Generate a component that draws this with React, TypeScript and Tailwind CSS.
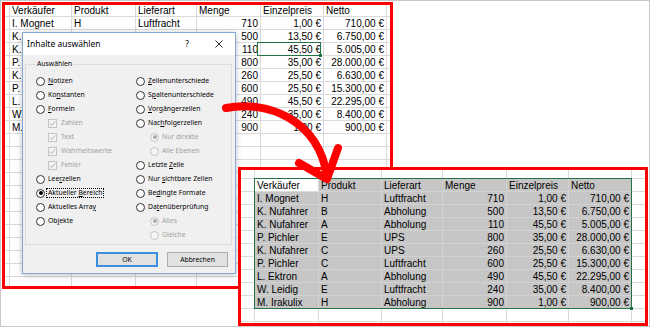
const daten = [
  ["I. Mognet", "H", "Luftfracht", "710", "1,00 €", "710,00 €"],
  ["K. Nufahrer", "B", "Abholung", "500", "13,50 €", "6.750,00 €"],
  ["K. Nufahrer", "A", "Abholung", "110", "45,50 €", "5.005,00 €"],
  ["P. Pichler", "E", "UPS", "800", "35,00 €", "28.000,00 €"],
  ["K. Nufahrer", "C", "UPS", "260", "25,50 €", "6.630,00 €"],
  ["P. Pichler", "C", "Luftfracht", "600", "25,50 €", "15.300,00 €"],
  ["L. Ektron", "A", "Abholung", "490", "45,50 €", "22.295,00 €"],
  ["W. Leidig", "E", "Luftfracht", "240", "35,00 €", "8.400,00 €"],
  ["M. Irakulix", "H", "Abholung", "900", "1,00 €", "900,00 €"],
];
const kopf = ["Verkäufer", "Produkt", "Lieferart", "Menge", "Einzelpreis", "Netto"];

// Tabelle 1: Spaltenbreiten links oben, Tabelle 2: unten rechts
const spalten1 = [2, 62, 64, 61, 64, 63, 63, 20];
const spalten2 = [14, 64, 63, 61, 64, 62, 63, 20];

function Zeile({ werte, breiten, hoehe, markiert, aktivErste, verdeckt }: { werte: string[]; breiten: number[]; hoehe: number; markiert?: boolean; aktivErste?: boolean; verdeckt?: boolean }) {
  return (
    <div className="flex shrink-0" style={{ height: hoehe }}>
      {breiten.map((b, i) => {
        // Zellen, die ganz hinter dem Dialog liegen, bleiben leer
        const txt = i > 0 && i < 7 && !(verdeckt && (i === 2 || i === 3)) ? werte[i - 1] ?? "" : "";
        const rechts = i >= 4 && i <= 6 && !kopf.includes(txt);
        const grau = markiert && i > 0 && i < 7 && !(aktivErste && i === 1);
        return (
          <div
            key={i}
            style={{ width: b }}
            className={
              "shrink-0 border-r border-b whitespace-nowrap overflow-hidden px-[2px] " +
              (grau ? "bg-[#c6c6c6] border-[#d2d2d2] " : "border-[#dadada] ") +
              (rechts ? "text-right" : "text-left")
            }
          >
            {txt}
          </div>
        );
      })}
    </div>
  );
}

function Radio({ an, grau }: { an?: boolean; grau?: boolean }) {
  return (
    <span className={"w-[9px] h-[9px] shrink-0 rounded-full border flex items-center justify-center " + (grau ? "border-[#c4c4c4] bg-[#f4f4f4]" : "border-[#333] bg-white")}>
      {an && <span className={"w-[4px] h-[4px] rounded-full " + (grau ? "bg-[#a8a8a8]" : "bg-black")} />}
    </span>
  );
}

function Haken() {
  return (
    <span className="w-[9px] h-[9px] shrink-0 border border-[#c4c4c4] bg-[#f4f4f4] flex items-center justify-center">
      <svg width="7" height="7" viewBox="0 0 7 7">
        <path d="M0.8 3.6 L2.7 5.4 L6.2 1.3" fill="none" stroke="#a8a8a8" strokeWidth="0.9" />
      </svg>
    </span>
  );
}

function Text({ t, u }: { t: string; u?: number }) {
  if (u === undefined) return <span>{t}</span>;
  return (
    <span>
      {t.slice(0, u)}
      <u>{t[u]}</u>
      {t.slice(u + 1)}
    </span>
  );
}

type Eintrag = { t: string; u?: number; art: "radio" | "check" | "sub"; an?: boolean; grau?: boolean; fokus?: boolean };

const links: Eintrag[] = [
  { t: "Notizen", u: 0, art: "radio" },
  { t: "Konstanten", u: 2, art: "radio" },
  { t: "Formeln", u: 0, art: "radio" },
  { t: "Zahlen", art: "check", grau: true },
  { t: "Text", art: "check", grau: true },
  { t: "Wahrheitswerte", art: "check", grau: true },
  { t: "Fehler", art: "check", grau: true },
  { t: "Leerzellen", u: 3, art: "radio" },
  { t: "Aktueller Bereich", u: 10, art: "radio", an: true, fokus: true },
  { t: "Aktuelles Array", u: 14, art: "radio" },
  { t: "Objekte", u: 2, art: "radio" },
];
const rechts: Eintrag[] = [
  { t: "Zeilenunterschiede", u: 0, art: "radio" },
  { t: "Spaltenunterschiede", u: 1, art: "radio" },
  { t: "Vorgängerzellen", u: 0, art: "radio" },
  { t: "Nachfolgerzellen", u: 3, art: "radio" },
  { t: "Nur direkte", art: "sub", an: true, grau: true },
  { t: "Alle Ebenen", art: "sub", grau: true },
  { t: "Letzte Zelle", u: 7, art: "radio" },
  { t: "Nur sichtbare Zellen", u: 4, art: "radio" },
  { t: "Bedingte Formate", u: 2, art: "radio" },
  { t: "Datenüberprüfung", u: 2, art: "radio" },
  { t: "Alles", art: "sub", an: true, grau: true },
  { t: "Gleiche", art: "sub", grau: true },
];

function Option({ e }: { e: Eintrag }) {
  return (
    <div className={"h-[14px] flex items-center " + (e.grau ? "text-[#a0a0a0] " : "") + (e.art === "check" ? "ml-[12px] gap-[4px]" : e.art === "sub" ? "ml-[14px] gap-[3px]" : "gap-[3px]")}>
      {e.art === "check" ? <Haken /> : <Radio an={e.an} grau={e.grau} />}
      {e.fokus ? (
        <span className="border border-dotted border-black px-[1px] -ml-[2px] leading-[8px]">
          <Text t={e.t} u={e.u} />
        </span>
      ) : (
        <Text t={e.t} u={e.u} />
      )}
    </div>
  );
}

function Dialog() {
  return (
    <div className="absolute left-[21px] top-[31px] w-[214px] h-[242px] border border-[#86a8d4] bg-[#f0f0f0] shadow-[0_1px_6px_rgba(0,0,0,0.25)] flex flex-col font-['Noto_Sans',sans-serif] text-black">
      <div className="h-[22px] shrink-0 bg-white flex items-center pl-[4px] pr-[6px] text-[8.5px]">
        <span className="flex-1">Inhalte auswählen</span>
        <span className="w-[20px] text-center">?</span>
        <span className="w-[12px]" />
        <span className="w-[20px] flex justify-center">
          <svg width="8" height="8" viewBox="0 0 8 8">
            <path d="M0.5 0.5 L7.5 7.5 M7.5 0.5 L0.5 7.5" stroke="#111" strokeWidth="0.9" />
          </svg>
        </span>
      </div>
      <div className="flex-1 flex flex-col text-[6.8px] leading-[10px]">
        <fieldset className="mt-[4px] ml-[2px] w-[207px] border border-[#dcdcdc] pt-[5px] pb-[2px] pl-[10px]">
          <legend className="px-[1px] leading-[10px]">Auswählen</legend>
          <div className="flex">
            <div className="w-[100px] flex flex-col">
              {links.map((e) => (
                <Option key={e.t} e={e} />
              ))}
            </div>
            <div className="flex-1 flex flex-col">
              {rechts.map((e) => (
                <Option key={e.t} e={e} />
              ))}
            </div>
          </div>
        </fieldset>
        <div className="mt-[7px] flex justify-end gap-[9px] pr-[7px]">
          <button className="w-[62px] h-[15px] bg-[#e1e1e1] border-2 border-[#3d8ee0] flex items-center justify-center">OK</button>
          <button className="w-[61px] h-[15px] bg-[#e1e1e1] border border-[#adadad] flex items-center justify-center">Abbrechen</button>
        </div>
      </div>
    </div>
  );
}

export default function App() {
  const leer1 = Array.from({ length: 13 });
  return (
    <div className="relative w-[650px] h-[327px] bg-white border border-[#c8c8c8] overflow-hidden font-['Liberation_Sans',Arial,sans-serif] text-[10px] text-black">
      {/* Tabelle oben links */}
      <div className="relative m-[1px] w-[391px] h-[287px] border-[3px] border-[#ff0000] overflow-hidden flex flex-col leading-[13px]">
        <div className="leading-[12px]">
          <Zeile werte={kopf} breiten={spalten1} hoehe={12} />
        </div>
        {daten.map((z, i) => (
          <Zeile key={i} werte={z} breiten={spalten1} hoehe={13} verdeckt={i > 0} />
        ))}
        {leer1.map((_, i) => (
          <Zeile key={"l" + i} werte={[]} breiten={spalten1} hoehe={13} />
        ))}
        <div className="absolute left-[252px] top-[37px] w-[64px] h-[14px] border border-[#217346]">
          <span className="absolute -right-[2px] -bottom-[2px] w-[3px] h-[3px] bg-[#217346]" />
        </div>
      </div>

      <Dialog />

      {/* Tabelle unten rechts, markierter Bereich */}
      <div className="absolute left-[237px] top-[166px] w-[410px] h-[159px] border-[3px] border-[#ff0000] bg-white overflow-hidden flex flex-col leading-[13px]">
        <Zeile werte={[]} breiten={spalten2} hoehe={9} />
        <Zeile werte={kopf} breiten={spalten2} hoehe={13} markiert aktivErste />
        {daten.map((z, i) => (
          <Zeile key={i} werte={z} breiten={spalten2} hoehe={13} markiert />
        ))}
        <Zeile werte={[]} breiten={spalten2} hoehe={13} />
        <Zeile werte={[]} breiten={spalten2} hoehe={13} />
        <div className="absolute left-[13px] top-[8px] w-[378px] h-[131px] border border-[#217346]">
          <span className="absolute -right-[2px] -bottom-[2px] w-[3px] h-[3px] bg-[#217346]" />
        </div>
      </div>

      {/* roter Pfeil */}
      <svg className="absolute left-0 top-0 pointer-events-none" width="650" height="327" viewBox="1 1 650 327">
        <path d="M226 108 C265 100 318 118 327 176" fill="none" stroke="#ff0000" strokeWidth="8" strokeLinecap="round" />
        <path d="M299 163 L327 179 L338 148" fill="none" stroke="#ff0000" strokeWidth="8" strokeLinecap="round" strokeLinejoin="round" />
      </svg>
    </div>
  );
}
